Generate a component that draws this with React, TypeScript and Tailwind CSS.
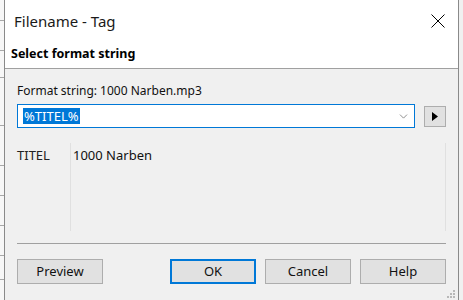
import { ChevronDown } from "lucide-react";

const font = { fontFamily: '"Noto Sans", "Open Sans", sans-serif' };

const BackStrip = () => (
    <div className="relative h-full w-[4px] bg-[#f7f7f7]">
        {[20, 50, 77, 125, 165, 195, 225, 255, 279].map((y) => (
            <div key={y} className="absolute left-0 h-px w-full bg-[#a8a8a8]" style={{ top: y }} />
        ))}
    </div>
);

const WinButton = ({ label, primary }: { label: string; primary?: boolean }) => (
    <button
        className={`h-[25px] w-[86px] bg-[#e1e1e1] text-[13px] text-[#111] ${primary ? "border-2 border-[#0078d7]" : "border border-[#adadad]"}`}
    >
        {label}
    </button>
);

const Grip = () => (
    <svg width="9" height="9" viewBox="0 0 9 9" className="absolute bottom-[1px] right-[2px]">
        {[
            [6, 0],
            [3, 3],
            [6, 3],
            [0, 6],
            [3, 6],
            [6, 6],
        ].map(([x, y]) => (
            <rect key={`${x}-${y}`} x={x} y={y} width="2" height="2" fill="#b8b8b8" />
        ))}
    </svg>
);

export default function App() {
    return (
        <div className="flex h-[300px] w-[463px] overflow-hidden bg-[#f0f0f0]" style={font}>
            <BackStrip />
            <div className="relative flex h-full w-[455px] flex-col border-x border-[#8a8a8a] bg-[#f0f0f0]">
                {/* title bar */}
                <div className="flex h-[39px] items-center justify-between bg-white pl-[9px] pr-[13px]">
                    <span className="mt-[4px] text-[15px] text-[#1a1a1a]">Filename - Tag</span>
                    <svg width="14" height="14" viewBox="0 0 14 14" className="mt-[2px]">
                        <path d="M0.5 0.5 L13.5 13.5 M13.5 0.5 L0.5 13.5" stroke="#000" strokeWidth="1" />
                    </svg>
                </div>
                {/* header */}
                <div className="flex h-[30px] items-start border-b border-[#a0a0a0] bg-white pl-[6px] pt-[6px]">
                    <span className="text-[12.5px] font-bold text-black">Select format string</span>
                </div>
                {/* body */}
                <div className="flex flex-1 flex-col px-[12px]">
                    <div className="mt-[13px] text-[12px] text-[#111]">Format string: 1000 Narben.mp3</div>
                    <div className="mt-[4px] flex items-center gap-[9px]">
                        <div className="flex h-[24px] w-[398px] items-center justify-between border border-[#0078d7] bg-white pl-[5px] pr-[4px]">
                            <span className="bg-[#0078d7] px-px text-[13px] leading-[16px] text-white">%TITEL%</span>
                            <ChevronDown size={13} strokeWidth={1.2} className="text-[#555]" />
                        </div>
                        <div className="flex h-[21px] w-[22px] items-center justify-center border border-[#adadad] bg-[#e1e1e1]">
                            <svg width="6" height="9" viewBox="0 0 6 9">
                                <path d="M0 0 L6 4.5 L0 9 Z" fill="#000" />
                            </svg>
                        </div>
                    </div>
                    {/* list */}
                    <div className="mt-[15px] flex h-[88px] w-[429px] border-r border-[#e0e0e0]">
                        <div className="w-[54px] border-r border-[#e0e0e0] pt-[3px] text-[13px] text-[#222]">TITEL</div>
                        <div className="pl-[2px] pt-[3px] text-[13px] text-[#111]">1000 Narben</div>
                    </div>
                    <div className="mt-[12px] h-px w-[429px] bg-[#a0a0a0]" />
                    <div className="mt-[15px] flex w-[429px] items-center">
                        <WinButton label="Preview" />
                        <div className="flex-1" />
                        <div className="flex gap-[9px]">
                            <WinButton label="OK" primary />
                            <WinButton label="Cancel" />
                            <WinButton label="Help" />
                        </div>
                    </div>
                </div>
                <Grip />
            </div>
            <div className="h-full flex-1 bg-[#f0f0f0]" />
        </div>
    );
}
